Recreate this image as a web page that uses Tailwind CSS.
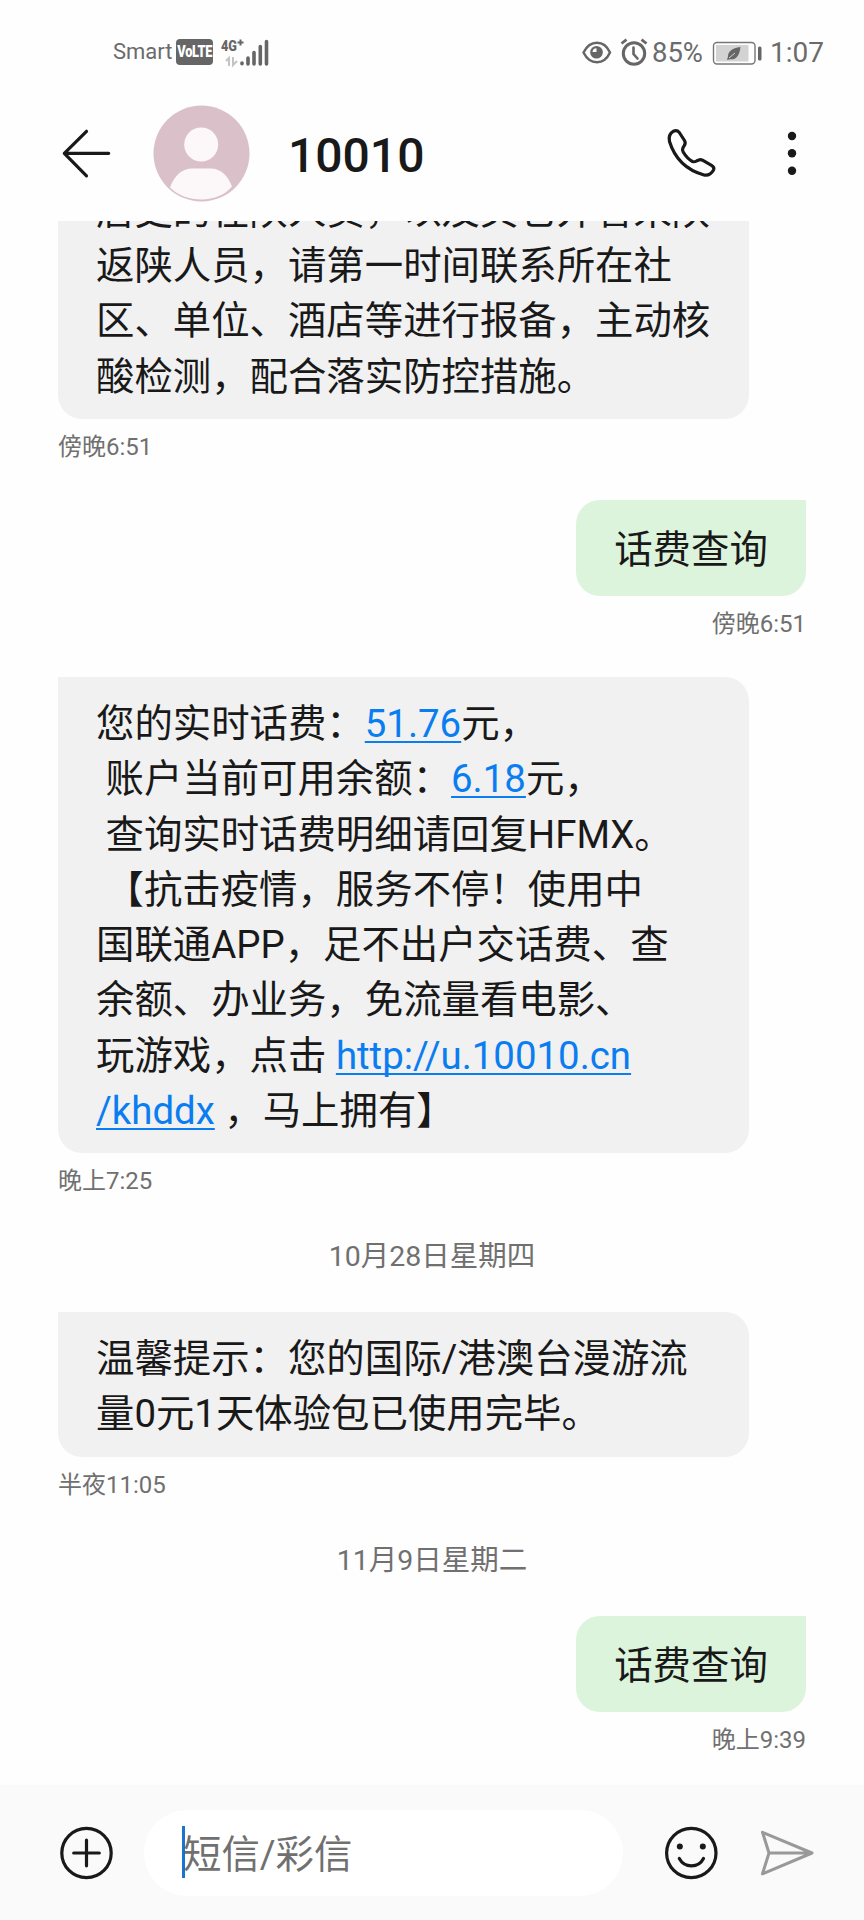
<!DOCTYPE html>
<html lang="zh-CN">
<head>
<meta charset="utf-8">
<title>10010</title>
<script src="https://cdn.jsdelivr.net/npm/@tailwindcss/browser@4"></script>
</head>
<body class="bg-[#fefefe]">
<div class="flex h-[1920px] w-[864px] flex-col overflow-hidden bg-[#fefefe] font-['Roboto','Noto_Sans_CJK_SC',sans-serif] text-[#191919]">

  <!-- Status bar -->
  <div class="flex h-[105px] shrink-0 items-center justify-between pl-[113px] pr-[40px] text-[#6b6b6b]">
    <div class="flex items-center">
      <span class="-mt-px w-[63px] text-[22px] leading-7">Smart</span>
      <span class="-mt-px flex h-[26px] w-[37px] items-center justify-center rounded-[4px] bg-[#666] text-[16px] font-black text-white"><span class="scale-x-[0.8] tracking-tight">VoLTE</span></span>
      <svg class="ml-[7px] overflow-visible" width="50" height="28" viewBox="220 38 50 28">
        <text x="221" y="50" font-family="Roboto" font-size="15" font-weight="900" fill="#666" textLength="16" lengthAdjust="spacingAndGlyphs">4G</text>
        <path d="M237.500 41.500h6M240.500 38.500v6" stroke="#666" stroke-width="2"/>
        <path d="M226 60l3-3v8M237 60l-4 4v-8" stroke="#c4c4c4" stroke-width="2" fill="none"/>
        <path d="M242 62v.8M248 57v6M254 51.500v11.500M260.300 45.500v17.500M266.500 40.500v22.500" stroke="#666" stroke-width="3.600" stroke-linecap="round"/>
      </svg>
    </div>
    <div class="flex items-center">
      <svg width="70" height="32" viewBox="582 37 70 32" fill="none" stroke="#666">
        <path d="M583.500 52.500C590 39.500 604 39.500 610 52.500C604 65.500 590 65.500 583.500 52.500z" stroke-width="2.500" stroke-linejoin="round"/>
        <circle cx="596.500" cy="52.300" r="6.300" fill="#666" stroke="none"/>
        <path d="M592.500 52a4 4 0 0 1 4-3.800v3.800z" fill="#fefefe" stroke="none"/>
        <circle cx="634" cy="53.500" r="10.700" stroke-width="3"/>
        <path d="M633.500 47.500v6.500l4 4.500" stroke-width="2.600" stroke-linecap="round"/>
        <path d="M621.500 43.500l5-3.800M646.500 43.500l-5-3.800" stroke-width="2.800"/>
      </svg>
      <span class="mt-px w-[60px] text-[28px] leading-8"><span class="inline-block origin-left scale-x-[0.98]">85%</span></span>
      <svg width="50" height="24" viewBox="712 40 50 24">
        <rect x="713.500" y="41.500" width="41.500" height="21.500" rx="3.500" fill="none" stroke="#777" stroke-width="1.400"/>
        <rect x="716" y="44" width="32.500" height="16.500" fill="#d3d3d3"/>
        <path d="M740.500 46c-9 1-12.500 5-12.500 9.500l-1 3.500 3-.8c5 1 9.500-2.500 10.500-12.200z" fill="#666"/>
        <path d="M729 57l6-5" stroke="#d3d3d3" stroke-width="1"/>
        <rect x="758" y="45.500" width="3.500" height="14" rx="1.500" fill="#666"/>
      </svg>
      <span class="mt-px ml-[8px] text-[28px] leading-8">1:07</span>
    </div>
  </div>

  <!-- Conversation header -->
  <header class="flex h-[116px] shrink-0 items-start pl-[60px]">
    <svg class="mt-[22px]" width="54" height="54" viewBox="60 127 54 54" fill="none" stroke="#191919" stroke-width="3.200" stroke-linecap="round" stroke-linejoin="round"><path d="M86.500 131.300L64.300 153.300l22.200 22.500M64.300 153.300H108.700"/></svg>
    <svg class="ml-[38px]" width="98" height="98" viewBox="0 0 98 98">
      <circle cx="49.500" cy="48.500" r="48" fill="#dac1c9"/>
      <circle cx="49.200" cy="39.500" r="17" fill="#fcf8fa"/>
      <path d="M18 82.500C22.500 70 30.500 63.500 40.500 63.500H58.500C68.500 63.500 75.500 70 80 81.500C73.500 89.500 62 94.500 49.500 94.500C37 94.500 26 90.500 18 82.500z" fill="#fcf8fa"/>
    </svg>
    <h1 class="mt-[23px] ml-[38px] w-[376px] text-[48px] leading-[56px] font-medium">10010</h1>
    <svg class="mt-[22px]" width="56" height="56" viewBox="664 127 56 56" fill="none" stroke="#191919" stroke-width="3.200" stroke-linejoin="round">
      <path d="M679.300 132.500L684.500 140.500Q686 143 684.300 145.500L682.900 148Q682 150 683.200 152Q687 158.500 692.500 161.500Q694.500 162.200 696.500 161L698.800 160Q700.500 159.200 702.500 160.200L711.500 165.300Q714.800 167.200 713.500 170Q710 176.200 704 175Q677.500 167.500 669.500 141.500Q668 134.500 673.500 131.200Q677 129.700 679.300 132.500z"/>
    </svg>
    <svg class="ml-[62px] mt-[22px]" width="20" height="54" viewBox="782 127 20 54" fill="#191919"><circle cx="792" cy="136" r="4.200"/><circle cx="792" cy="153.300" r="4.200"/><circle cx="792" cy="170.800" r="4.200"/></svg>
  </header>

  <!-- Messages -->
  <main class="flex h-[1564px] shrink-0 flex-col overflow-hidden pl-[58px] pr-[58px] text-[38.400px] leading-[55.300px] whitespace-nowrap">
    <section class="flex h-[279px] shrink-0 flex-col items-start">
      <div class="flex h-[198px] w-[691px] flex-col justify-end overflow-hidden rounded-b-[24px] bg-[#f1f1f1] px-[38px] pb-[15px]">
        <p>居史的在陕人员，以及其它外省来陕<br>返陕人员，请第一时间联系所在社<br>区、单位、酒店等进行报备，主动核<br>酸检测，配合落实防控措施。</p>
      </div>
      <time class="mt-[11px] text-[24px] leading-[34px] text-[#707070]">傍晚6:51</time>
    </section>

    <section class="flex h-[177px] shrink-0 flex-col items-end">
      <div class="flex h-[96px] w-[230px] items-center justify-center rounded-[24px] rounded-tr-none bg-[#dcf4dc] pt-[4px]">话费查询</div>
      <time class="mt-[11px] text-[24px] leading-[34px] text-[#707070]">傍晚6:51</time>
    </section>

    <section class="flex h-[557px] shrink-0 flex-col items-start">
      <div class="h-[476px] w-[691px] rounded-[24px] rounded-tl-none bg-[#f1f1f1] px-[38px] pt-[19px]">
        <p class="whitespace-pre">您的实时话费：<a class="text-[#0a7df0] underline decoration-2 underline-offset-[4px]">51.76</a>元，
 账户当前可用余额：<a class="text-[#0a7df0] underline decoration-2 underline-offset-[4px]">6.18</a>元，
 查询实时话费明细请回复HFMX。
 【抗击疫情，服务不停！使用中
国联通APP，足不出户交话费、查
余额、办业务，免流量看电影、
玩游戏，点击 <a class="text-[#0a7df0] underline decoration-2 underline-offset-[4px] [text-decoration-skip-ink:none]">http://u.10010.cn</a>
<a class="text-[#0a7df0] underline decoration-2 underline-offset-[4px] [text-decoration-skip-ink:none]">/khddx</a> ，马上拥有】</p>
      </div>
      <time class="mt-[11px] text-[24px] leading-[34px] text-[#707070]">晚上7:25</time>
    </section>

    <div class="h-[78px] shrink-0 pt-px text-center text-[28.500px] leading-[44px] text-[#707070]">10月28日星期四</div>

    <section class="flex h-[226px] shrink-0 flex-col items-start">
      <div class="h-[145px] w-[691px] rounded-[24px] rounded-tl-none bg-[#f1f1f1] px-[38px] pt-[19px]">
        <p>温馨提示：您的国际/港澳台漫游流<br>量0元1天体验包已使用完毕。</p>
      </div>
      <time class="mt-[11px] text-[24px] leading-[34px] text-[#707070]">半夜11:05</time>
    </section>

    <div class="h-[78px] shrink-0 pt-px text-center text-[28.500px] leading-[44px] text-[#707070]">11月9日星期二</div>

    <section class="flex shrink-0 flex-col items-end">
      <div class="flex h-[96px] w-[230px] items-center justify-center rounded-[24px] rounded-tr-none bg-[#dcf4dc] pt-[4px]">话费查询</div>
      <time class="mt-[11px] text-[24px] leading-[34px] text-[#707070]">晚上9:39</time>
    </section>
  </main>

  <!-- Composer -->
  <footer class="flex h-[135px] shrink-0 items-center bg-[#fafafa] pl-[58px]">
    <svg width="56" height="56" viewBox="-28 -28 56 56" fill="none" stroke="#191919" stroke-width="3.200" stroke-linecap="round"><circle cx="0.500" cy="0" r="24.700"/><path d="M-12.300 0h25.600M0.500 -12.800v25.600"/></svg>
    <div class="ml-[30px] flex h-[86px] w-[479px] items-center rounded-full bg-white pl-[38px] text-[38.400px] leading-[55px] text-[#707070]"><span class="-mt-[2px] h-[52px] w-[3px] shrink-0 bg-[#1a75d2]"></span><span class="-ml-[2px] pt-[3px]">短信/彩信</span></div>
    <svg class="ml-[40px]" width="56" height="56" viewBox="-28 -28 56 56" fill="none" stroke="#191919" stroke-width="3.200" stroke-linecap="round"><circle cx="0.300" cy="0" r="24.700"/><path d="M-11.700 5.500C-6.500 15.300 7.500 15.300 12.500 5.500"/><g fill="#191919" stroke="none"><circle cx="-11.200" cy="-6.500" r="3"/><circle cx="11.800" cy="-6.500" r="3"/></g></svg>
    <svg class="ml-[39px]" width="60" height="56" viewBox="758 1825 60 56" fill="none" stroke="#999" stroke-width="3" stroke-linecap="round" stroke-linejoin="round"><path d="M762.500 1832.300L812 1853L762.500 1873.800L769 1853zM769 1853H811.500"/></svg>
  </footer>
</div>
</body>
</html>
